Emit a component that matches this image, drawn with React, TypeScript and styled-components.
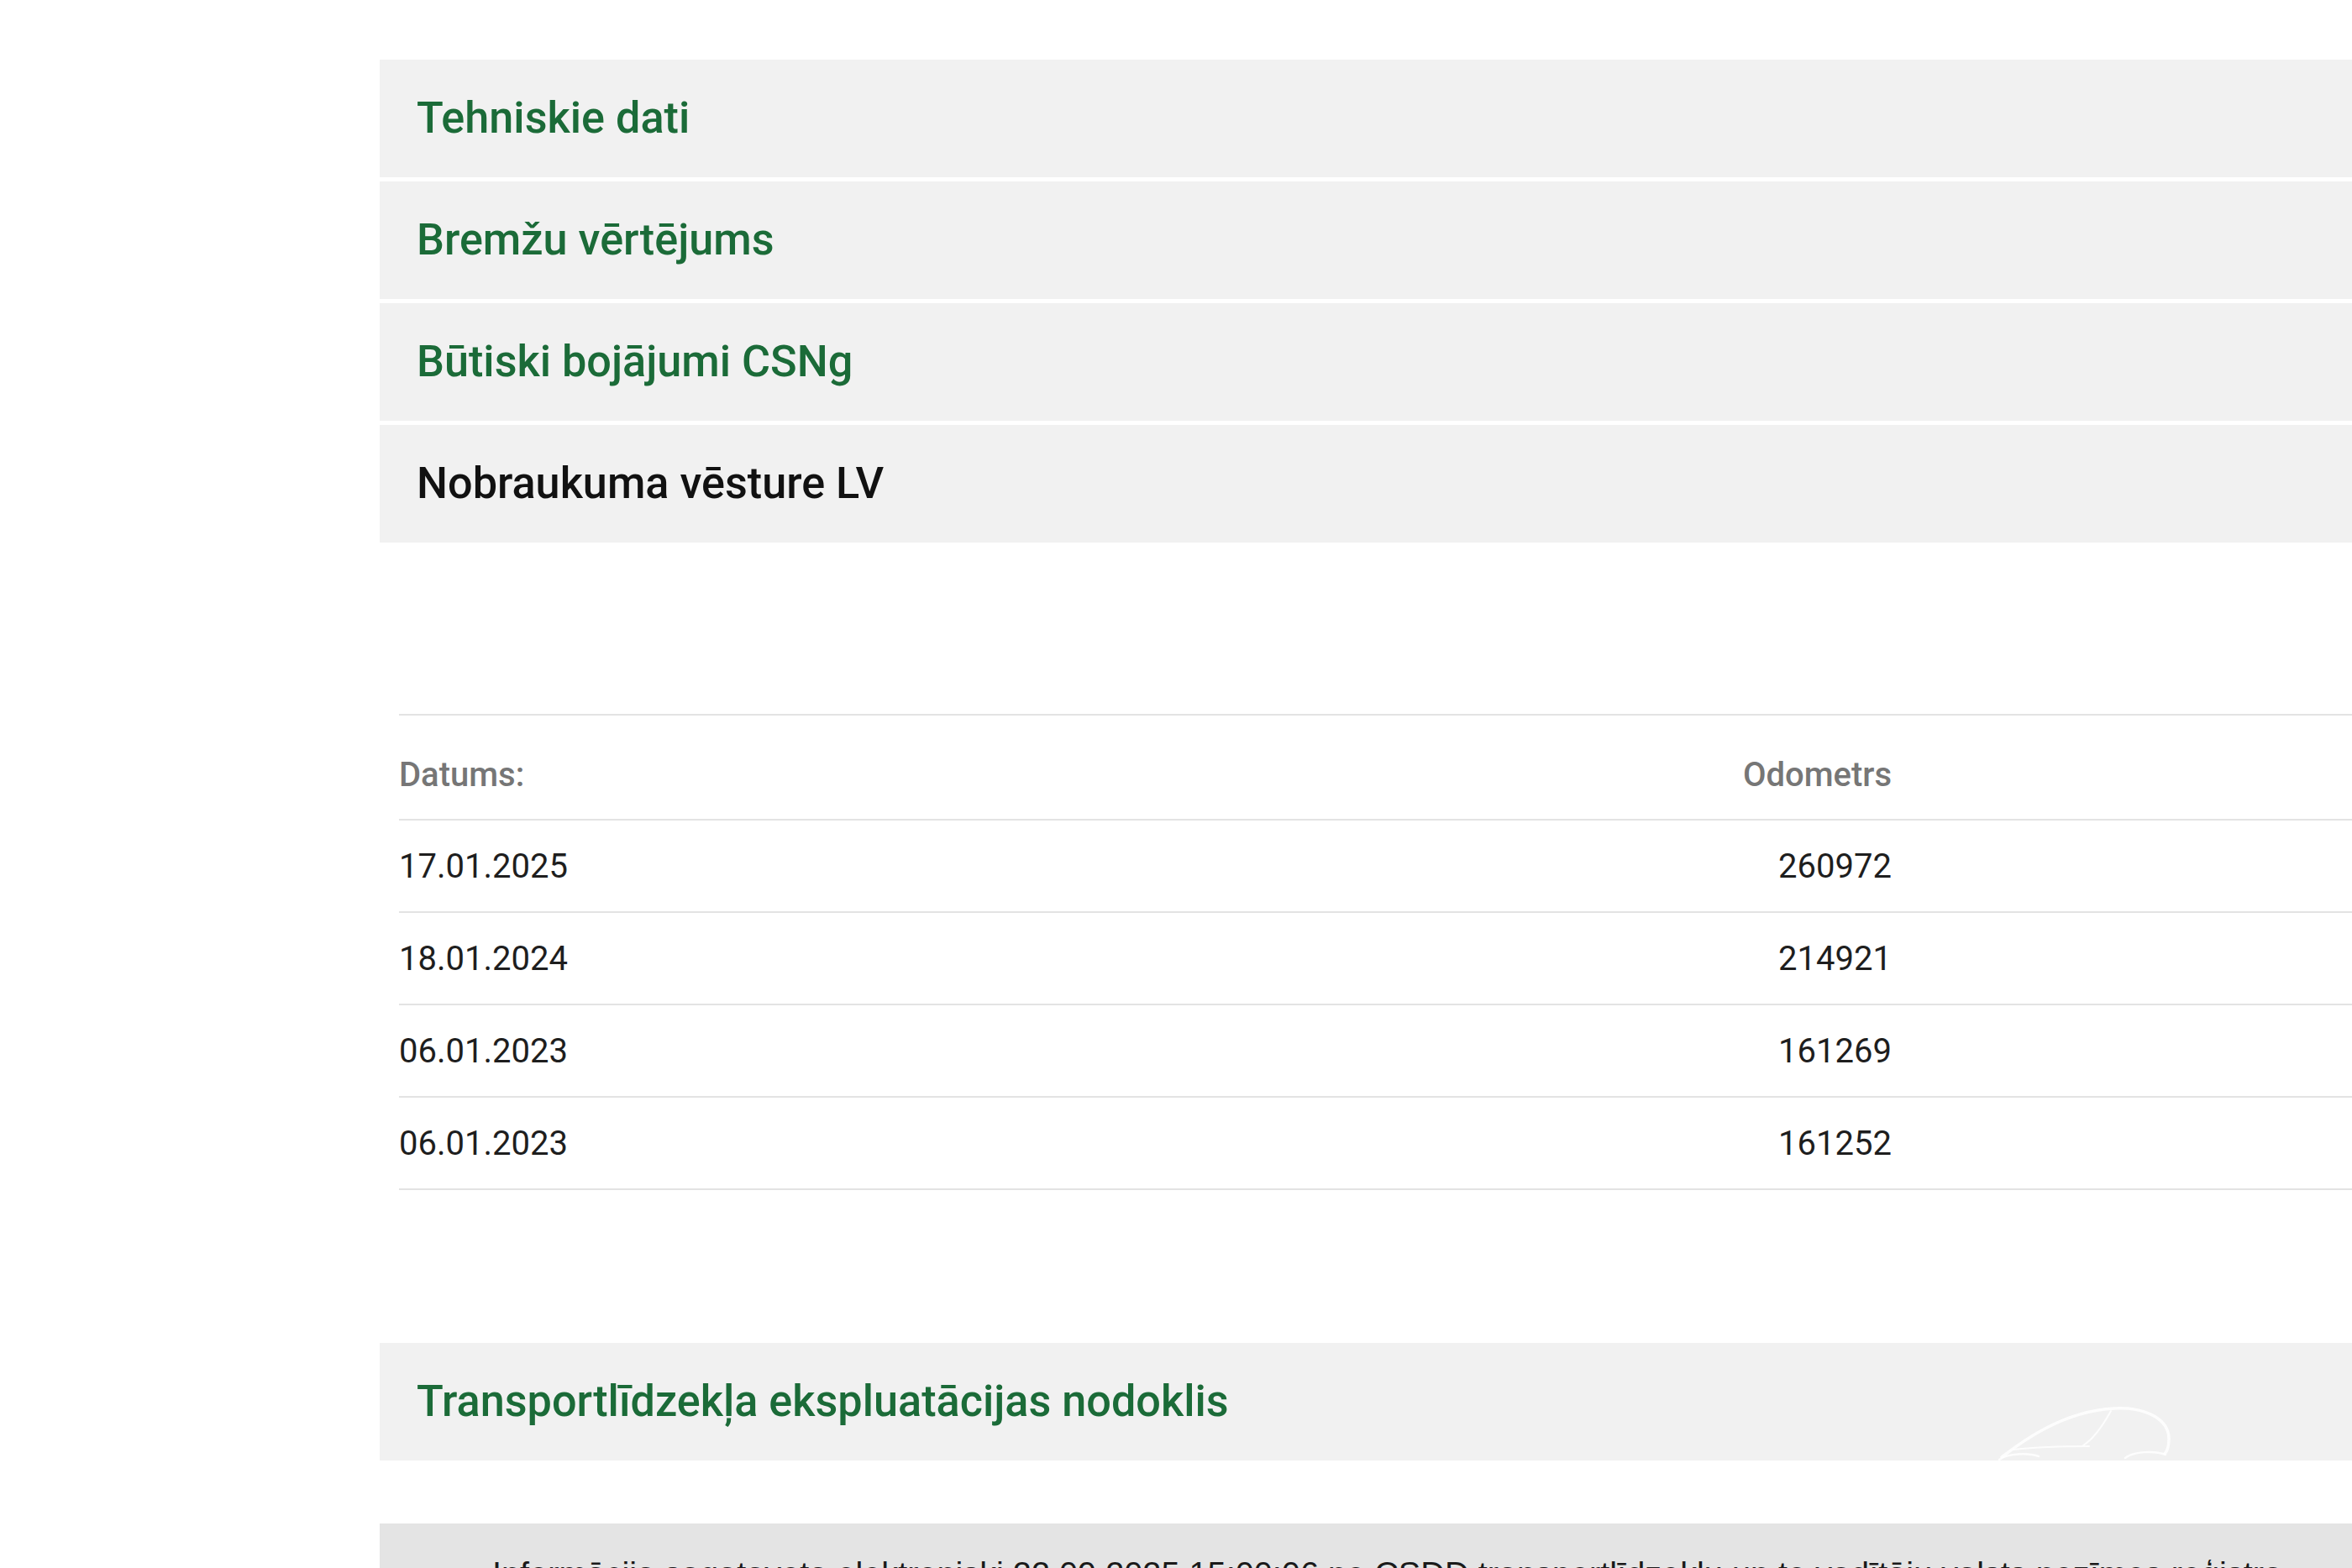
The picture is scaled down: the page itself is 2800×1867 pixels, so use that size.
import React from 'react';
import styled, { createGlobalStyle } from 'styled-components';

const GlobalStyle = createGlobalStyle`
  html, body {
    margin: 0;
    padding: 0;
    background: #ffffff;
  }
  body {
    font-family: Roboto, "Noto Sans", Arial, sans-serif;
    overflow: hidden;
  }
  * { box-sizing: border-box; }
`;

const Page = styled.div`
  padding: 71px 0 0 452px;
  min-height: 1867px;
`;

const Accordion = styled.div`
  display: flex;
  flex-direction: column;
  gap: 5px;
`;

const PanelHeader = styled.div<{ $active?: boolean }>`
  position: relative;
  height: 140px;
  display: flex;
  align-items: center;
  padding-left: 44px;
  padding-bottom: 2px;
  background: #f1f1f1;
  font-family: Roboto, "Noto Sans", sans-serif;
  font-weight: 500;
  font-size: 52.2px;
  color: ${(p) => (p.$active ? '#111111' : '#1b6b38')};
  white-space: nowrap;
  overflow: hidden;
`;

const MileageTable = styled.div`
  margin: 204px 0 0 23px;
  border-bottom: 2px solid #e3e3e3;
`;

const Row = styled.div<{ $head?: boolean }>`
  display: grid;
  grid-template-columns: 1fr 400px 548px;
  border-top: 2px solid #e3e3e3;
  padding: ${(p) => (p.$head ? '47px 0 28px' : '31px 0 29px')};
  font-family: Roboto, "Noto Sans", sans-serif;
  font-size: 40px;
  line-height: 48px;
  font-weight: ${(p) => (p.$head ? 500 : 400)};
  color: ${(p) => (p.$head ? '#767676' : '#1e1e1e')};
`;

const Cell = styled.div<{ $right?: boolean }>`
  text-align: ${(p) => (p.$right ? 'right' : 'left')};
  white-space: nowrap;
`;

const TaxPanel = styled(PanelHeader)`
  margin-top: 182px;
`;

const CarMark = styled.svg`
  position: absolute;
  left: 1923px;
  top: 69px;
  width: 215px;
  height: 75px;
  pointer-events: none;
`;

const Footer = styled.div`
  margin-top: 75px;
  background: #e4e4e4;
  padding: 36px 0 36px 134px;
  font-family: "Liberation Sans", Arial, sans-serif;
  font-size: 39.7px;
  line-height: 46px;
  color: #1a1a1a;
  white-space: nowrap;
  overflow: hidden;
`;

const sections = [
  { title: 'Tehniskie dati' },
  { title: 'Bremžu vērtējums' },
  { title: 'Būtiski bojājumi CSNg' },
  { title: 'Nobraukuma vēsture LV', active: true },
];

const mileage = [
  { date: '17.01.2025', km: '260972' },
  { date: '18.01.2024', km: '214921' },
  { date: '06.01.2023', km: '161269' },
  { date: '06.01.2023', km: '161252' },
];

export default function App() {
  return (
    <>
      <GlobalStyle />
      <Page>
        <Accordion>
          {sections.map((s) => (
            <PanelHeader key={s.title} $active={s.active}>
              {s.title}
            </PanelHeader>
          ))}
        </Accordion>

        <MileageTable>
          <Row $head>
            <Cell>Datums:</Cell>
            <Cell $right>Odometrs</Cell>
            <Cell />
          </Row>
          {mileage.map((m, i) => (
            <Row key={i}>
              <Cell>{m.date}</Cell>
              <Cell $right>{m.km}</Cell>
              <Cell />
            </Row>
          ))}
        </MileageTable>

        <TaxPanel>
          Transportlīdzekļa ekspluatācijas nodoklis
          <CarMark viewBox="0 0 215 75" fill="none">
            <g stroke="#ffffff" strokeOpacity="0.85" strokeLinecap="round">
              <path d="M8,67 C30,50 80,12 142,9 C185,7 207,25 207,45 C207,55 205,60 202,63" strokeWidth="3.5" />
              <path d="M138,12 C128,30 118,45 105,53" strokeWidth="2" />
              <path d="M22,58 C50,55 90,54 112,54" strokeWidth="2" />
              <path d="M5,70 C15,62 40,62 52,66" strokeWidth="2.5" />
              <path d="M155,68 C165,60 190,59 203,64" strokeWidth="2.5" />
            </g>
          </CarMark>
        </TaxPanel>

        <Footer>
          Informācija sagatavota elektroniski 22.09.2025 15:00:06 no CSDD transportlīdzekļu un to vadītāju valsts nozīmes reģistra
        </Footer>
      </Page>
    </>
  );
}
